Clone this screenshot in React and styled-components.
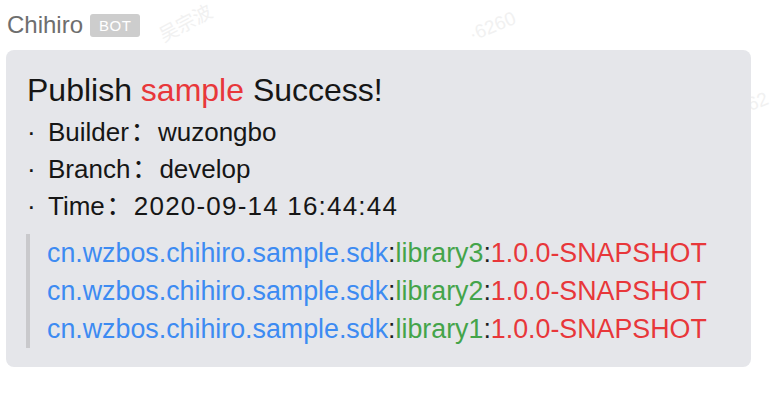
import React from "react";
import styled, { createGlobalStyle } from "styled-components";

const GlobalStyle = createGlobalStyle`
    html, body {
        margin: 0;
        padding: 0;
        background: #ffffff;
    }
    body {
        font-family: "Liberation Sans", "Noto Sans CJK SC", Arial, sans-serif;
    }
`;

const artifacts = [
    { group: "cn.wzbos.chihiro.sample.sdk", name: "library3", version: "1.0.0-SNAPSHOT" },
    { group: "cn.wzbos.chihiro.sample.sdk", name: "library2", version: "1.0.0-SNAPSHOT" },
    { group: "cn.wzbos.chihiro.sample.sdk", name: "library1", version: "1.0.0-SNAPSHOT" },
];

const info = [
    { label: "Builder", value: "wuzongbo" },
    { label: "Branch", value: "develop" },
    { label: "Time", value: "2020-09-14 16:44:44", tracking: 1.2 },
];

const App = () => {
    return (
        <Page>
            <GlobalStyle />
            <Watermark $x={166} $y={20} $rotate={-28}>吴宗波</Watermark>
            <Watermark $x={474} $y={24} $rotate={-22}>·6260</Watermark>
            <Watermark $x={752} $y={94} $rotate={-22}>62</Watermark>
            <Sender>
                <Name>Chihiro</Name>
                <Badge>BOT</Badge>
            </Sender>
            <Card>
                <Title>
                    Publish <Red>sample</Red> Success!
                </Title>
                <InfoList>
                    {info.map((item) => (
                        <InfoRow key={item.label}>
                            <Bullet>·</Bullet>
                            {item.label}
                            <Colon>：</Colon>
                            <Value $tracking={item.tracking}>{item.value}</Value>
                        </InfoRow>
                    ))}
                </InfoList>
                <Quote>
                    {artifacts.map((a) => (
                        <QuoteLine key={a.name}>
                            <Blue>{a.group}</Blue>:<Green>{a.name}</Green>:<Red>{a.version}</Red>
                        </QuoteLine>
                    ))}
                </Quote>
            </Card>
        </Page>
    );
};

const Page = styled.div`
    position: relative;
    width: 776px;
    height: 404px;
    overflow: hidden;
    padding: 13px 0 0 6px;
    box-sizing: border-box;
`;

const Watermark = styled.span`
    position: absolute;
    left: ${(p) => p.$x}px;
    top: ${(p) => p.$y}px;
    transform: rotate(${(p) => p.$rotate}deg);
    transform-origin: left bottom;
    font-size: 19px;
    color: #f1f1f1;
    pointer-events: none;
    z-index: 0;
    white-space: nowrap;
`;

const Sender = styled.div`
    position: relative;
    z-index: 1;
    display: flex;
    align-items: center;
    gap: 7px;
    height: 24px;
    margin-bottom: 13px;
    padding-left: 1px;
`;

const Name = styled.span`
    font-size: 24px;
    line-height: 24px;
    color: #6e6e6e;
`;

const Badge = styled.span`
    display: inline-flex;
    align-items: center;
    height: 23px;
    padding: 0 9px;
    border-radius: 3px;
    background: #cdcdcd;
    color: #ffffff;
    font-size: 15px;
    letter-spacing: 0.5px;
`;

const Card = styled.div`
    position: relative;
    z-index: 1;
    width: 745px;
    box-sizing: border-box;
    padding: 20px 20px 19px 21px;
    background: #e5e6ea;
    border-radius: 8px;
    color: #161616;
`;

const Title = styled.div`
    font-size: 32px;
    line-height: 40px;
    margin-bottom: 4px;
`;

const InfoList = styled.div`
    display: flex;
    flex-direction: column;
`;

const InfoRow = styled.div`
    display: flex;
    align-items: baseline;
    font-size: 26px;
    line-height: 37px;
    white-space: nowrap;
`;

const Bullet = styled.span`
    width: 21px;
    flex: none;
`;

const Colon = styled.span`
    width: 29px;
    flex: none;
    text-align: center;
`;

const Value = styled.span`
    letter-spacing: ${(p) => p.$tracking || 0}px;
`;

const Quote = styled.div`
    margin-top: 9px;
    margin-left: -1px;
    padding-left: 17px;
    border-left: 4px solid #c9c9cc;
`;

const QuoteLine = styled.div`
    font-size: 26.8px;
    line-height: 38px;
    white-space: nowrap;
    color: #1e1e1e;
`;

const Blue = styled.span`
    color: #3d8bf2;
`;

const Green = styled.span`
    color: #44a44a;
`;

const Red = styled.span`
    color: #e8373a;
`;

export default App;
